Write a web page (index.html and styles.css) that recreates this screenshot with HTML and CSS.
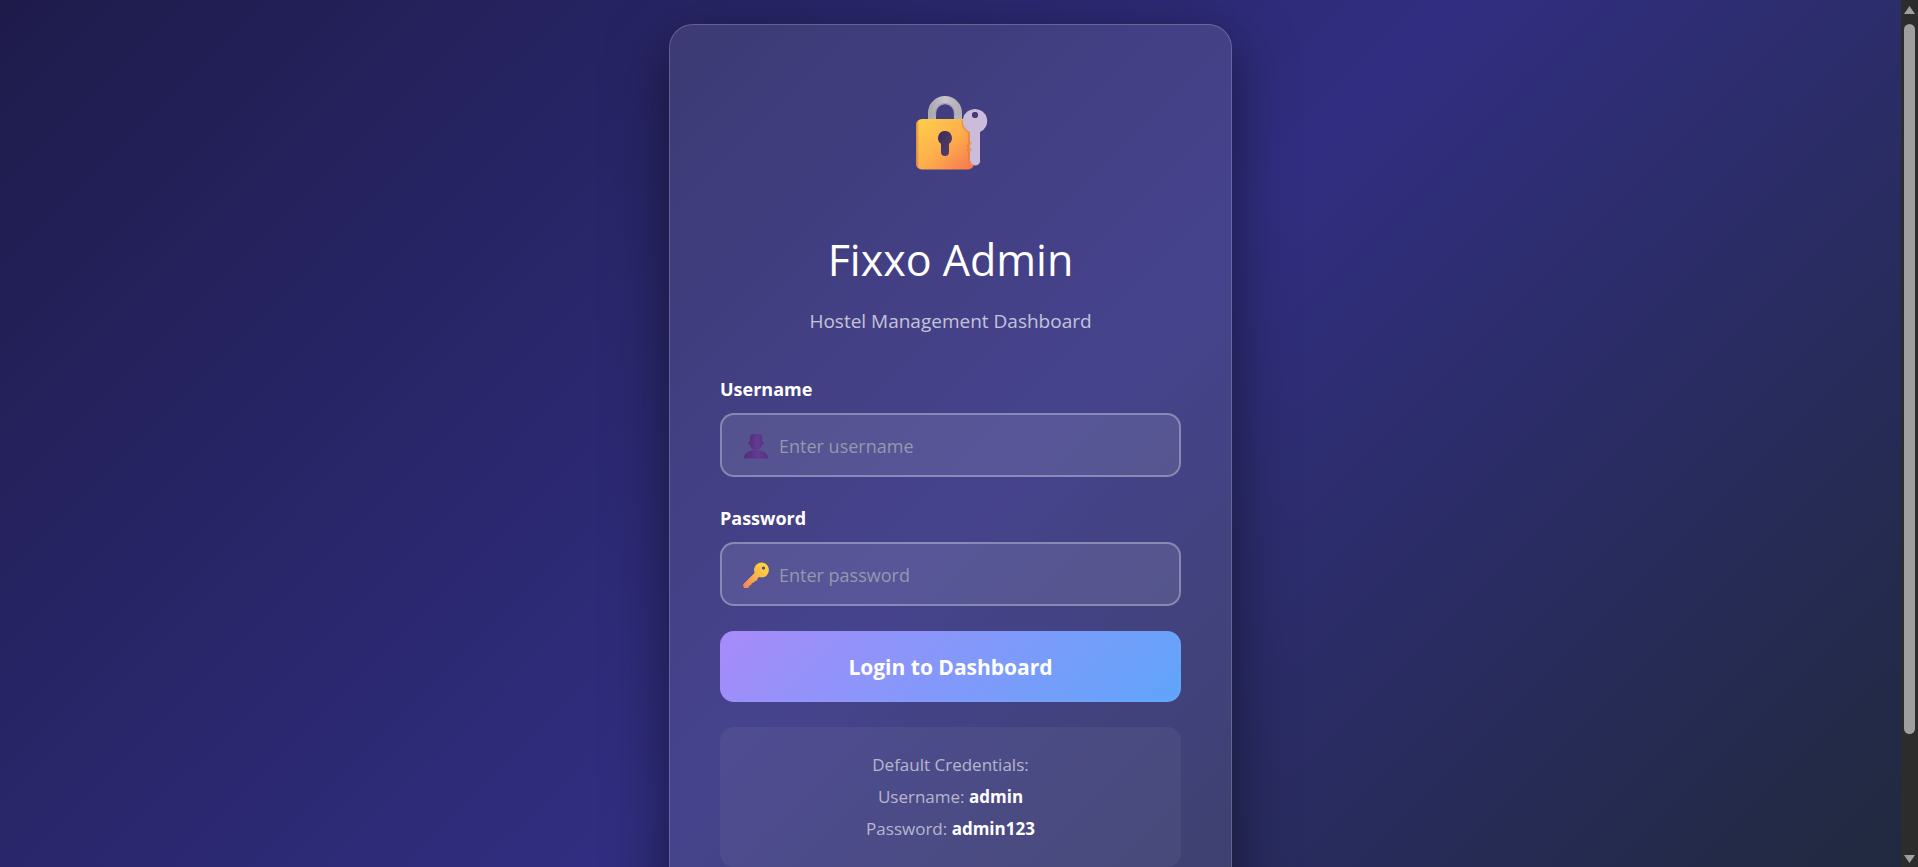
FILE: index.html
```html
<!DOCTYPE html>
<html lang="en">
<head>
  <meta charset="UTF-8" />
  <meta name="viewport" content="width=device-width, initial-scale=1.0"/>
  <title>Fixxo Admin</title>
  <link rel="stylesheet" href="styles.css">
</head>
<body>

<main class="page">
  <div class="backdrop">
    <div class="login-card">
      <svg class="logo" viewBox="23 14 76 78" aria-hidden="true">
        <defs>
          <linearGradient id="gold" x1="0" y1="0" x2="1" y2="1">
            <stop offset="0" stop-color="#ffd04a"/>
            <stop offset="0.5" stop-color="#fdb04c"/>
            <stop offset="1" stop-color="#f8744f"/>
          </linearGradient>
          <linearGradient id="edge" x1="0" y1="0" x2="1" y2="0">
            <stop offset="0" stop-color="#c9703c" stop-opacity="0.7"/>
            <stop offset="0.06" stop-color="#c9703c" stop-opacity="0"/>
          </linearGradient>
          <linearGradient id="steel" x1="0" y1="0" x2="1" y2="0">
            <stop offset="0" stop-color="#aeabb0"/>
            <stop offset="0.5" stop-color="#c9c4cd"/>
            <stop offset="1" stop-color="#b3b0b8"/>
          </linearGradient>
          <linearGradient id="hole" x1="0" y1="0" x2="1" y2="1">
            <stop offset="0" stop-color="#3a2a55"/>
            <stop offset="1" stop-color="#54406f"/>
          </linearGradient>
        </defs>
        <path d="M42 42V33a13 13 0 0 1 26 0v9" fill="none" stroke="url(#steel)" stroke-width="8"/>
        <path d="M45.500 36V33a9.500 9.500 0 0 1 19 0v3" fill="none" stroke="#ab91c4" stroke-width="1.500" opacity="0.700"/>
        <rect x="26" y="39" width="58" height="50.500" rx="6" fill="url(#gold)"/>
        <rect x="26" y="39" width="58" height="50.500" rx="6" fill="url(#edge)"/>
        <path d="M55 51a7 7 0 0 1 4 12.700V72a4 4 0 0 1-8 0V63.700A7 7 0 0 1 55 51z" fill="url(#hole)"/>
        <path d="M72.500 40a12 12 0 0 0 6.500 12v12l-1.500 2 1.500 2-1.500 2 1.500 3v10" fill="none" stroke="#d7823f" stroke-width="2" opacity="0.600"/>
        <path fill-rule="evenodd" d="M85 29a12 12 0 0 1 5 23v27.500a4.500 4.500 0 0 1-9 2.500l-1-1v-9l2-2-2-2v-3l2-2-2-2V52a12 12 0 0 1 5-23zM85 32a3 3 0 1 0 .01 0z" fill="#cbbcdc"/>
        <circle cx="85" cy="35" r="3" fill="#4b3875"/>
      </svg>

      <h1>Fixxo Admin</h1>
      <p class="subtitle">Hostel Management Dashboard</p>

      <form>
        <label for="username">Username</label>
        <div class="field">
          <svg class="field-icon" viewBox="0 0 26 26" aria-hidden="true">
            <defs>
              <linearGradient id="bust" x1="0" y1="0" x2="1" y2="0">
                <stop offset="0" stop-color="#4f2e79"/>
                <stop offset="0.6" stop-color="#643a94"/>
                <stop offset="1" stop-color="#54317f"/>
              </linearGradient>
            </defs>
            <path d="M1 25.500c0-5 5-8.500 12-8.500s12 3.500 12 8.500z" fill="url(#bust)"/>
            <path d="M5.500 8.500h1.500V4q0-3 3-3h6q3 0 3 3v4.500h1.500v3H19q-1 5.500-6 5.500t-6-5.500H5.500z" fill="url(#bust)"/>
          </svg>
          <input type="text" id="username" placeholder="Enter username" />
        </div>

        <label for="password">Password</label>
        <div class="field">
          <svg class="field-icon" viewBox="0 0 26 26" aria-hidden="true">
            <defs>
              <linearGradient id="key" x1="1" y1="0" x2="0" y2="1">
                <stop offset="0" stop-color="#ffdc3c"/>
                <stop offset="0.500" stop-color="#fcb548"/>
                <stop offset="1" stop-color="#f67d5a"/>
              </linearGradient>
            </defs>
            <path d="M11 7A7.500 7.500 0 1 1 18.500 15.500L16 15l-1.500 1.500-.5 2-2 .5-1 1.500-2 .5-1 2-1.500.5-1 2A2.800 2.800 0 0 1 1 21.500L11.500 11z" fill="url(#key)"/>
            <circle cx="20.500" cy="6" r="1.600" fill="#544580"/>
          </svg>
          <input type="password" id="password" placeholder="Enter password" />
        </div>

        <button type="submit" class="btn-login">Login to Dashboard</button>
      </form>

      <div class="credentials">
        <p>Default Credentials:</p>
        <p>Username: <strong>admin</strong></p>
        <p>Password: <strong>admin123</strong></p>
      </div>
    </div>
  </div>
</main>

<div class="scrollbar" aria-hidden="true">
  <svg class="arrow" viewBox="0 0 13 10"><path d="M6.500 1 12 9H1z"/></svg>
  <div class="track"><div class="thumb"></div></div>
  <svg class="arrow" viewBox="0 0 13 10"><path d="M6.500 9 12 1H1z"/></svg>
</div>

</body>
</html>
```
FILE: styles.css
```css
* {
  box-sizing: border-box;
  margin: 0;
  padding: 0;
}
body {
  display: flex;
  height: 100vh;
  overflow: hidden;
  font-family: "Segoe UI", "Open Sans", "Noto Sans", sans-serif;
  color: white;
}
.page {
  flex: 1;
  overflow-y: auto;
  scrollbar-width: none;
}
.backdrop {
  display: flex;
  justify-content: center;
  align-items: center;
  min-height: 100%;
  padding: 24px;
  background: linear-gradient(135deg, #1e1b4b 0%, #312e81 50%, #1f2937 100%);
}
.login-card {
  width: 100%;
  max-width: 563px;
  padding: 50px 50px 126px;
  background: rgba(255, 255, 255, 0.1);
  border: 1px solid rgba(255, 255, 255, 0.2);
  border-radius: 24px;
  box-shadow: 0 20px 60px rgba(0, 0, 0, 0.5);
  text-align: center;
}
.logo {
  display: block;
  width: 76px;
  height: 78px;
  margin: 19px auto 56px;
}
h1 {
  font-size: 43px;
  font-weight: 400;
  line-height: 64px;
}
.subtitle {
  margin: 15px 0 38px;
  font-size: 19px;
  line-height: 28px;
  color: rgba(255, 255, 255, 0.7);
}
label {
  display: block;
  margin-bottom: 11px;
  padding-top: 3px;
  font-size: 18px;
  font-weight: 700;
  line-height: 26px;
  text-align: left;
}
.field {
  display: flex;
  align-items: center;
  gap: 10px;
  height: 64px;
  margin-bottom: 25px;
  padding: 2px 21px 0;
  background: rgba(255, 255, 255, 0.1);
  border: 2px solid rgba(255, 255, 255, 0.3);
  border-radius: 14px;
}
.field-icon {
  flex: none;
  width: 26px;
  height: 26px;
}
.field input {
  flex: 1;
  min-width: 0;
  background: none;
  border: none;
  outline: none;
  color: white;
  font-family: inherit;
  font-size: 18px;
}
.field input::placeholder {
  color: #9498ae;
}
.btn-login {
  display: block;
  width: 100%;
  height: 71px;
  background: linear-gradient(135deg, #a78bfa, #60a5fa);
  border: none;
  border-radius: 14px;
  color: white;
  font-family: inherit;
  font-size: 21px;
  font-weight: 700;
  cursor: pointer;
}
.credentials {
  margin-top: 25px;
  padding: 22px;
  background: rgba(255, 255, 255, 0.05);
  border-radius: 14px;
  font-size: 17px;
  line-height: 32px;
  color: rgba(255, 255, 255, 0.6);
}
.credentials strong {
  color: white;
}
.scrollbar {
  display: flex;
  flex-direction: column;
  align-items: center;
  width: 17px;
  padding: 5px 0 3px;
  background: #2c2c2c;
}
.arrow {
  flex: none;
  width: 13px;
  height: 10px;
  fill: #9f9f9f;
}
.track {
  flex: 1;
  width: 11px;
  padding: 9px 0 5px;
}
.thumb {
  height: 86%;
  background: #9f9f9f;
  border-radius: 6px;
}
```
